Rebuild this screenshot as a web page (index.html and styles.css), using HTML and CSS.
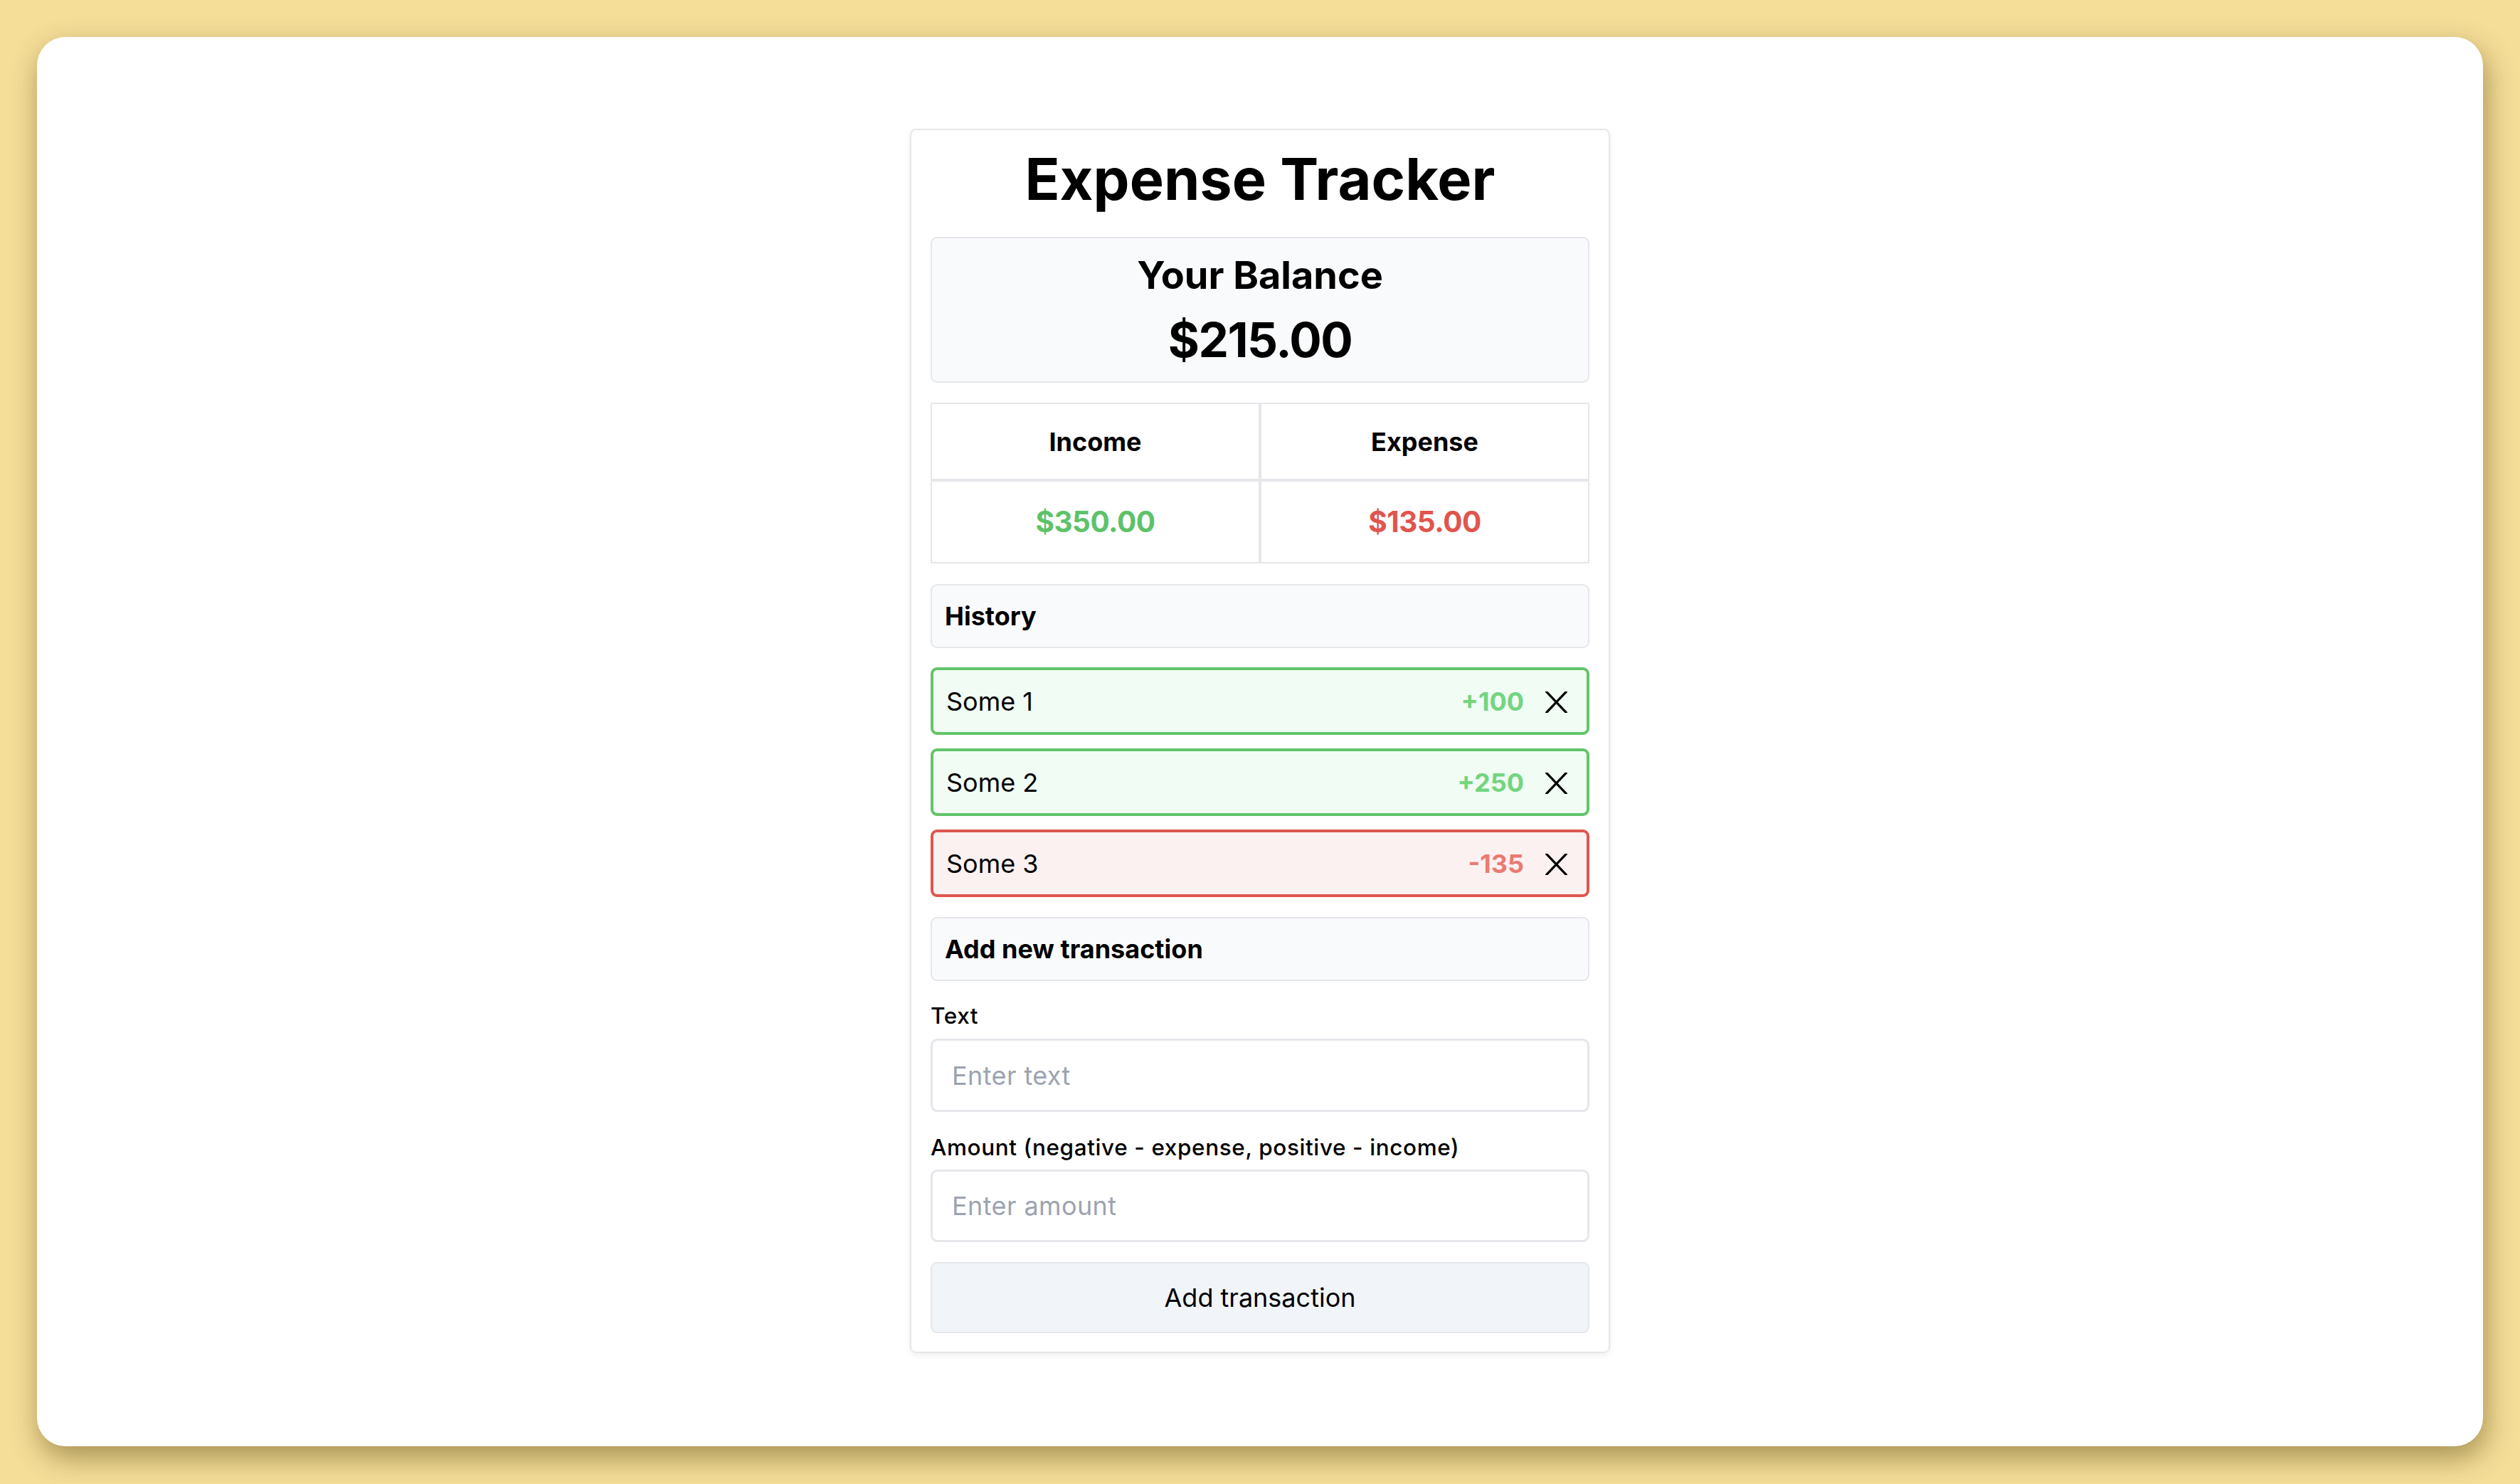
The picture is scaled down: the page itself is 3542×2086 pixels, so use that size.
FILE: index.html
```html
<!DOCTYPE html>
<html lang="en">
<head>
<meta charset="utf-8">
<title>Expense Tracker</title>
<link rel="stylesheet" href="styles.css">
</head>
<body>
<div class="frame">
  <div class="card">
    <h1 class="title">Expense Tracker</h1>
    <div class="balance">
      <h2 class="balance-label">Your Balance</h2>
      <p class="balance-value">$215.00</p>
    </div>
    <div class="summary">
      <div class="cell head">Income</div>
      <div class="cell head">Expense</div>
      <div class="cell value plus">$350.00</div>
      <div class="cell value minus">$135.00</div>
    </div>
    <div class="section">History</div>
    <ul class="list">
      <li class="item income">
        <span class="item-text">Some 1</span>
        <span class="item-amount">+100</span>
        <button class="del" aria-label="Delete"><svg viewBox="0 0 31 30" width="31" height="30"><path d="M-1.5 -3 L32.5 33 M32.5 -3 L-1.5 33" stroke="#000" stroke-width="3.2" fill="none"/></svg></button>
      </li>
      <li class="item income">
        <span class="item-text">Some 2</span>
        <span class="item-amount">+250</span>
        <button class="del" aria-label="Delete"><svg viewBox="0 0 31 30" width="31" height="30"><path d="M-1.5 -3 L32.5 33 M32.5 -3 L-1.5 33" stroke="#000" stroke-width="3.2" fill="none"/></svg></button>
      </li>
      <li class="item expense">
        <span class="item-text">Some 3</span>
        <span class="item-amount">-135</span>
        <button class="del" aria-label="Delete"><svg viewBox="0 0 31 30" width="31" height="30"><path d="M-1.5 -3 L32.5 33 M32.5 -3 L-1.5 33" stroke="#000" stroke-width="3.2" fill="none"/></svg></button>
      </li>
    </ul>
    <div class="section add">Add new transaction</div>
    <label class="label first" for="t">Text</label>
    <input class="field f1" id="t" type="text" placeholder="Enter text">
    <label class="label second" for="a">Amount (negative - expense, positive - income)</label>
    <input class="field f2" id="a" type="text" placeholder="Enter amount">
    <button class="submit">Add transaction</button>
  </div>
</div>
</body>
</html>
```
FILE: styles.css
```css
* { box-sizing: border-box; }
html, body { margin: 0; padding: 0; }
body {
  background: #f5de98;
  padding: 52px;
  font-family: Inter, "Liberation Sans", sans-serif;
  color: #000;
}
.frame {
  width: 3438px;
  height: 1981px;
  background: #fff;
  border-radius: 40px;
  box-shadow: 4px 16px 40px rgba(70, 50, 0, 0.45);
  padding-top: 129px;
  display: flex;
  flex-direction: column;
  align-items: center;
}
.card {
  width: 984px;
  height: 1721px;
  border: 2px solid #e5e7eb;
  border-radius: 9px;
  box-shadow: 0 3px 8px rgba(0, 0, 0, 0.07);
  padding: 27px 27px 26px 27px;
  display: flex;
  flex-direction: column;
}
.title {
  margin: 0;
  font-size: 81px;
  line-height: 84px;
  font-weight: 700;
  text-align: center;
}
.balance {
  margin-top: 39px;
  height: 205px;
  background: #f9fafb;
  border: 2px solid #e5e7eb;
  border-radius: 9px;
  padding-top: 21px;
  text-align: center;
}
.balance-label {
  margin: 0;
  font-size: 54px;
  line-height: 61px;
  font-weight: 700;
}
.balance-value {
  margin: 20px 0 0 0;
  font-size: 67.5px;
  line-height: 81px;
  font-weight: 700;
  letter-spacing: -1.5px;
}
.summary {
  margin-top: 28px;
  display: grid;
  grid-template-columns: 1fr 1fr;
  grid-template-rows: 109px 117px;
}
.cell {
  border: 2px solid #e5e7eb;
  display: flex;
  align-items: center;
  justify-content: center;
  font-weight: 700;
}
.cell.head { font-size: 36px; }
.cell.value { font-size: 40.5px; letter-spacing: -0.5px; }
.plus { color: #5ec26a; }
.minus { color: #e0554e; }
.section {
  margin-top: 29px;
  height: 90px;
  background: #f9fafb;
  border: 2px solid #e5e7eb;
  border-radius: 9px;
  padding-left: 18px;
  display: flex;
  align-items: center;
  font-size: 36px;
  font-weight: 700;
}
.section.add { margin-top: 28px; }
.list {
  list-style: none;
  margin: 27px 0 0 0;
  padding: 0;
  display: flex;
  flex-direction: column;
  gap: 19px;
}
.item {
  height: 95px;
  border: 4px solid;
  border-radius: 9px;
  display: flex;
  align-items: center;
  padding: 0 27px 0 18px;
  font-size: 36px;
}
.item.income { border-color: #62c46a; background: #f1fcf4; }
.item.expense { border-color: #df5650; background: #fcf1f1; }
.item-text { flex: 1; }
.item-amount { font-weight: 700; }
.income .item-amount { color: #73d57f; }
.expense .item-amount { color: #ea7a72; }
.del {
  margin-left: 30px;
  padding: 0;
  border: 0;
  background: none;
  width: 31px;
  height: 30px;
  display: block;
  margin-top: 3px;
}
.del svg { display: block; }
.label {
  display: block;
  font-size: 31.5px;
  line-height: 45px;
  font-weight: 500;
  letter-spacing: 0.6px;
}
.label.first { margin-top: 26px; }
.label.second { margin-top: 27px; }
.field {
  display: block;
  width: 100%;
  border: 3px solid #e5e7eb;
  border-radius: 9px;
  padding: 0 27px;
  font-family: Inter, "Liberation Sans", sans-serif;
  font-size: 36px;
  letter-spacing: 0.4px;
  background: #fff;
  outline: none;
}
.field::placeholder { color: #9ca3af; }
.f1 { margin-top: 10px; height: 103px; }
.f2 { margin-top: 9px; height: 102px; }
.submit {
  margin-top: 28px;
  height: 100px;
  width: 100%;
  background: #f1f4f9;
  border: 2px solid #e5e7eb;
  border-radius: 9px;
  font-family: Inter, "Liberation Sans", sans-serif;
  font-size: 36px;
  color: #000;
}
```
